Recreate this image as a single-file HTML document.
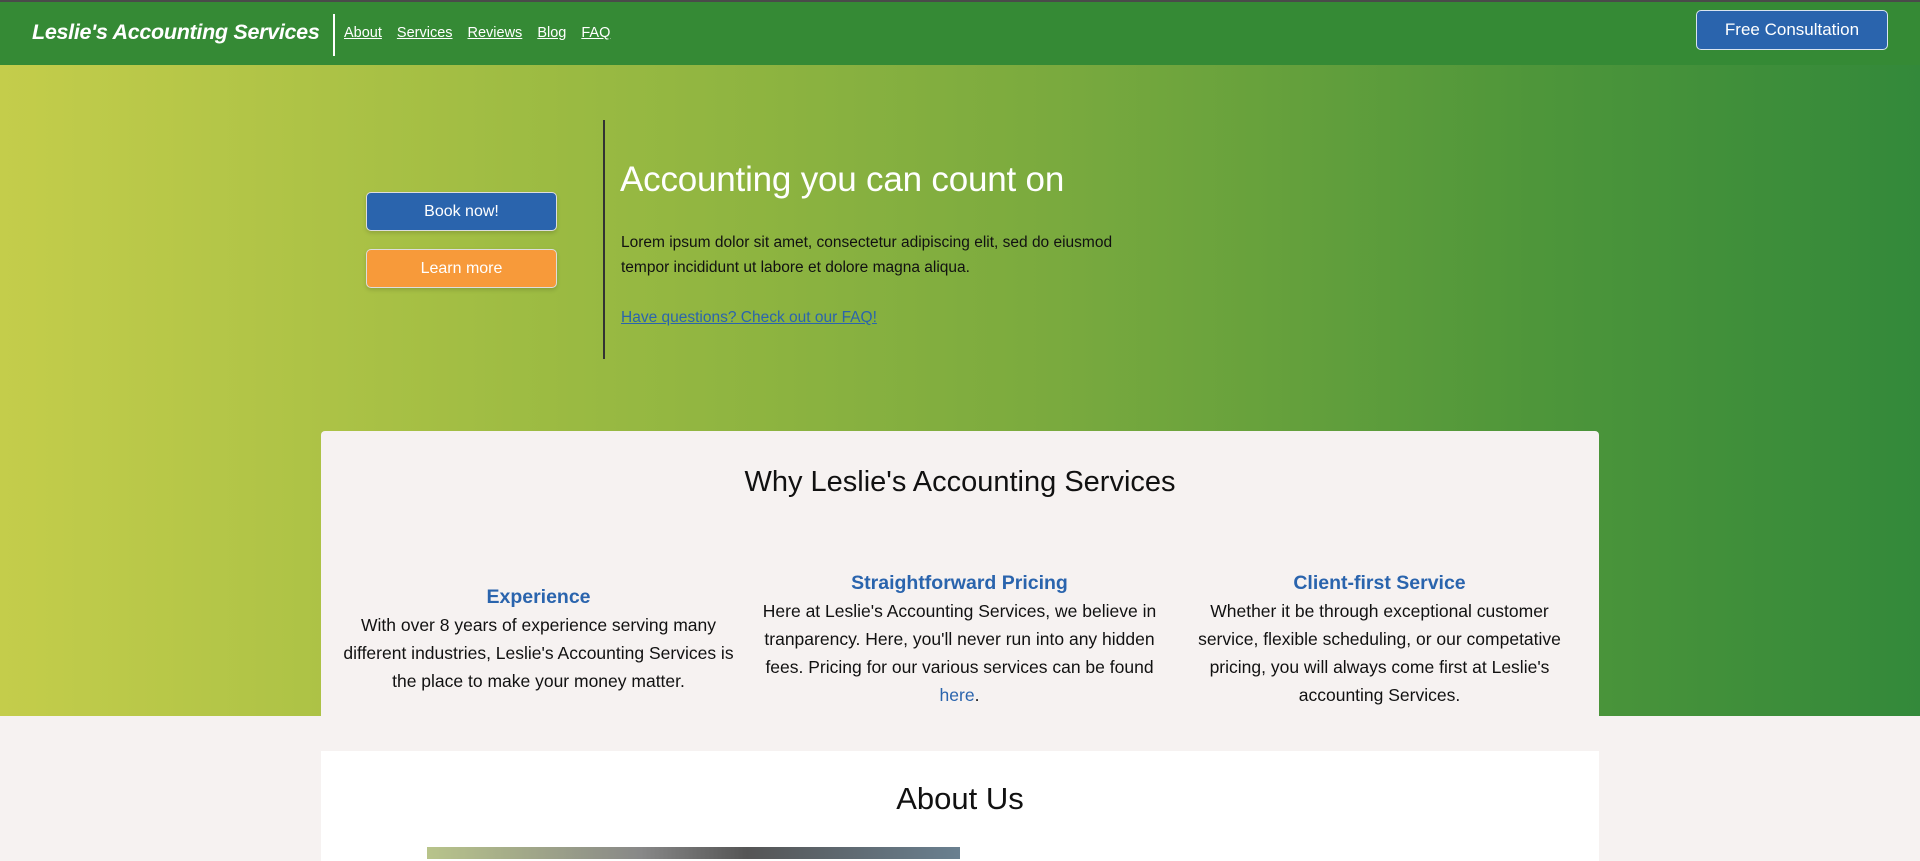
<!DOCTYPE html>
<html><head><meta charset="utf-8"><style>
*{box-sizing:border-box;margin:0;padding:0}
body{width:1920px;height:856px;overflow:hidden;background:#f6f2f1;font-family:"Liberation Sans",sans-serif;position:relative}
.nav{position:absolute;left:0;top:0;width:1920px;height:65px;background:#358a35;border-top:2px solid #4a4a4a}
.logo{position:absolute;left:32px;top:18px;color:#fff;font-weight:bold;font-style:italic;font-size:21.5px;letter-spacing:-0.3px}
.div{position:absolute;left:333px;top:12px;width:2px;height:42px;background:#fff}
.links{position:absolute;left:344px;top:23px;font-size:14.5px}
.links a{color:#fff;text-decoration:underline;margin-right:15px}
.fc{position:absolute;left:1696px;top:8px;width:192px;height:40px;background:#2a64ad;border:1px solid #d9e4f0;border-radius:5px;color:#fff;font-size:17px;text-align:center;line-height:38px}
.hero{position:absolute;left:0;top:65px;width:1920px;height:651px;background:linear-gradient(90deg,#c4cd4b 0%,#9aba42 30%,#7aaa3e 55%,#4e963a 80%,#33893a 100%)}
.btn{position:absolute;left:366px;width:191px;height:39px;border:1px solid #ddd;border-radius:5px;color:#fff;font-size:16px;text-align:center;line-height:37px;box-shadow:0 2px 4px rgba(0,0,0,.15)}
.vl{position:absolute;left:603px;width:2px;height:239px;background:#333}
h1{position:absolute;left:620px;font-weight:normal;font-size:35px;color:#fff;letter-spacing:-0.2px}
.p{position:absolute;left:621px;font-size:15.5px;line-height:25px;color:#111;width:530px}
.faq{position:absolute;left:621px;font-size:15.5px;color:#2a64ad;text-decoration:underline}
.card{position:absolute;left:321px;top:431px;width:1278px;height:320px;background:#f6f2f1;border-radius:4px}
.white{position:absolute;left:321px;top:751px;width:1278px;height:110px;background:#fff}
h2{position:absolute;width:100%;text-align:center;font-weight:400;font-size:29px;color:#111}
.col{position:absolute;width:415px;text-align:center;font-size:17.5px;line-height:28px;color:#111}
.col b{display:block;color:#2a64ad;font-size:19.5px;line-height:28px}
.col a{color:#2a64ad;text-decoration:none}
.img{position:absolute;left:427px;top:847px;width:533px;height:12px;background:linear-gradient(90deg,#b8c48a,#888 40%,#555 60%,#6a8090)}
</style></head><body>
<div class="nav"><div class="logo">Leslie's Accounting Services</div><div class="div"></div>
<div class="links"><a>About</a><a>Services</a><a>Reviews</a><a>Blog</a><a>FAQ</a></div>
<div class="fc">Free Consultation</div></div>
<div class="hero">
<div class="btn" style="top:127px;background:#2a64ad">Book now!</div>
<div class="btn" style="top:184px;background:#f79a3a">Learn more</div>
<div class="vl" style="top:55px"></div>
<h1 style="top:95px">Accounting you can count on</h1>
<div class="p" style="top:165px">Lorem ipsum dolor sit amet, consectetur adipiscing elit, sed do eiusmod tempor incididunt ut labore et dolore magna aliqua.</div>
<div class="faq" style="top:244px">Have questions? Check out our FAQ!</div>
</div>
<div class="card">
<h2 style="top:35px">Why Leslie's Accounting Services</h2>
<div class="col" style="left:10px;top:152px"><b>Experience</b>With over 8 years of experience serving many different industries, Leslie's Accounting Services is the place to make your money matter.</div>
<div class="col" style="left:431px;top:138px"><b>Straightforward Pricing</b>Here at Leslie's Accounting Services, we believe in tranparency. Here, you'll never run into any hidden fees. Pricing for our various services can be found <a>here</a>.</div>
<div class="col" style="left:866px;top:138px;width:385px"><b>Client-first Service</b>Whether it be through exceptional customer service, flexible scheduling, or our competative pricing, you will always come first at Leslie's accounting Services.</div>
</div>
<div class="white"><h2 style="top:30px;font-size:31px">About Us</h2></div>
<div class="img"></div>
</body></html>
